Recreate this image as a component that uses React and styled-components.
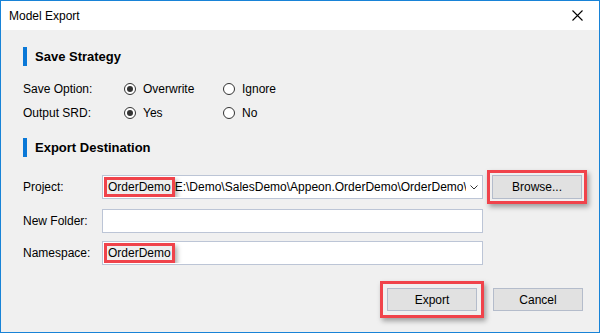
import React from 'react';
import styled, { createGlobalStyle } from 'styled-components';

const Global = createGlobalStyle`
  html, body { margin: 0; padding: 0; background: #f0f0f0; }
  * { box-sizing: border-box; }
  body { font-family: "Liberation Sans", Arial, sans-serif; font-size: 12px; color: #000; }
`;

const Window = styled.div`
  width: 600px;
  height: 333px;
  border: 1px solid #1883d7;
  display: flex;
  flex-direction: column;
  background: #f0f0f0;
  overflow: hidden;
`;

const TitleBar = styled.div`
  height: 29px;
  background: #fff;
  display: flex;
  align-items: center;
  justify-content: space-between;
  padding: 0 16px 0 8px;
`;

const Title = styled.span`
  font-size: 12px;
`;

const Body = styled.div`
  flex: 1;
  display: flex;
  flex-direction: column;
  padding: 0 16px 0 22px;
`;

const Section = styled.div`
  display: flex;
  align-items: center;
  gap: 8px;
  height: 19px;
  margin-top: ${p => p.$top}px;
  font-weight: bold;
  font-size: 13px;
  &::before {
    content: '';
    width: 4px;
    height: 19px;
    background: #0a78d7;
  }
`;

const Row = styled.div`
  display: flex;
  align-items: center;
  height: 24px;
  margin-top: ${p => p.$top || 0}px;
`;

const Label = styled.span`
  width: ${p => p.$w}px;
  flex-shrink: 0;
`;

const Option = styled.label`
  width: 99px;
  display: flex;
  align-items: center;
  gap: 7px;
`;

const Radio = styled.span`
  width: 12px;
  height: 12px;
  border-radius: 50%;
  border: 1px solid #333;
  background: #fff;
  display: flex;
  align-items: center;
  justify-content: center;
  &::after {
    content: '';
    width: 6px;
    height: 6px;
    border-radius: 50%;
    background: ${p => (p.$on ? '#333' : 'transparent')};
  }
`;

const Field = styled.div`
  width: 381px;
  height: 24px;
  background: #fff;
  border: 1px solid #bcc5d6;
  display: flex;
  align-items: center;
  padding-left: 1px;
  overflow: hidden;
  white-space: nowrap;
`;

const FieldText = styled.div`
  flex: 1;
  overflow: hidden;
  display: flex;
  align-items: center;
`;

const Arrow = styled.div`
  width: 16px;
  flex-shrink: 0;
  display: flex;
  align-items: center;
  justify-content: center;
`;

const Mark = styled.span`
  display: inline-block;
  border: 3px solid #f0434b;
  background: #eeeeee;
  padding: 0 1px;
  line-height: 14px;
  box-shadow: 2px 3px 5px rgba(0, 0, 0, 0.35);
`;

const Side = styled.div`
  display: flex;
  align-items: center;
  margin-left: 9px;
`;

const Button = styled.button`
  width: 90px;
  height: ${p => p.$h || 24}px;
  background: #e1e1e1;
  border: 1px solid #b4bccb;
  font: inherit;
  color: #000;
  padding: 0;
`;

const Highlight = styled.span`
  display: inline-flex;
  padding: ${p => p.$pad}px;
  margin: -${p => p.$pad + 3}px;
  border: 3px solid #f0434b;
  box-shadow: 2px 3px 5px rgba(0, 0, 0, 0.35);
`;

const Footer = styled.div`
  display: flex;
  justify-content: flex-end;
  gap: 16px;
  margin-top: 23px;
`;

export default function App() {
  return (
    <Window>
      <Global />
      <TitleBar>
        <Title>Model Export</Title>
        <svg width="11" height="11" viewBox="0 0 11 11">
          <path d="M0.5 0.5 L10.5 10.5 M10.5 0.5 L0.5 10.5" stroke="#000" strokeWidth="1.1" />
        </svg>
      </TitleBar>
      <Body>
        <Section $top={17}>Save Strategy</Section>
        <Row $top={11}>
          <Label $w={101}>Save Option:</Label>
          <Option><Radio $on />Overwrite</Option>
          <Option><Radio />Ignore</Option>
        </Row>
        <Row>
          <Label $w={101}>Output SRD:</Label>
          <Option><Radio $on />Yes</Option>
          <Option><Radio />No</Option>
        </Row>
        <Section $top={13}>Export Destination</Section>
        <Row $top={18}>
          <Label $w={79}>Project:</Label>
          <Field>
            <FieldText>
              <Mark>OrderDemo</Mark>E:\Demo\SalesDemo\Appeon.OrderDemo\OrderDemo\
            </FieldText>
            <Arrow>
              <svg width="8" height="5" viewBox="0 0 8 5">
                <path d="M0.5 0.5 L4 4 L7.5 0.5" stroke="#333" strokeWidth="1" fill="none" />
              </svg>
            </Arrow>
          </Field>
          <Side>
            <Highlight $pad={2}>
              <Button>Browse...</Button>
            </Highlight>
          </Side>
        </Row>
        <Row $top={10}>
          <Label $w={79}>New Folder:</Label>
          <Field />
        </Row>
        <Row $top={8}>
          <Label $w={79}>Namespace:</Label>
          <Field>
            <FieldText>
              <Mark>OrderDemo</Mark>
            </FieldText>
          </Field>
        </Row>
        <Footer>
          <Highlight $pad={4}>
            <Button $h={23}>Export</Button>
          </Highlight>
          <Button $h={23}>Cancel</Button>
        </Footer>
      </Body>
    </Window>
  );
}
